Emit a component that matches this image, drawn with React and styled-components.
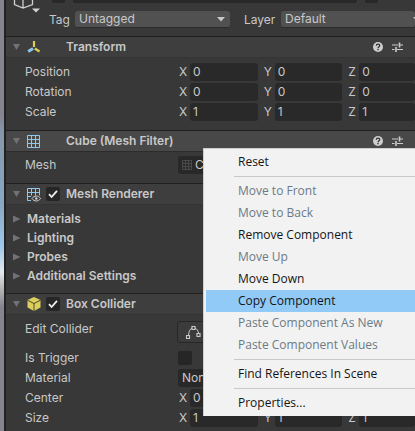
import React from "react";
import styled, { createGlobalStyle } from "styled-components";

const GlobalStyle = createGlobalStyle`
  * { box-sizing: border-box; }
  body {
    margin: 0;
    background: #383838;
    color: #c8c8c8;
    font: 12px/18px Inter, "Liberation Sans", sans-serif;
    overflow: hidden;
  }
  button, input, select { font: inherit; color: inherit; margin: 0; }
`;

const Page = styled.div`
  position: relative;
  display: flex;
  min-height: 100vh;
  overflow: hidden;
`;

const SceneEdge = styled.div`
  flex: 0 0 6px;
  border-right: 2px solid #222222;
  background: linear-gradient(#85858f 27%, #8595a8 30%, #8aa9c6 48%, #9fc8ea 57%, #e3e9ed 63%, #c0c0c0 66%, #85858f 71%);
`;

const Inspector = styled.main`
  flex: 1;
  min-width: 0;
`;

const ObjectHeader = styled.header`
  display: flex;
  height: 36px;
  overflow: hidden;
`;

const ObjectIcon = styled.div`
  flex: 0 0 42px;
  padding-left: 7px;
  svg { display: block; }
`;

const ObjectFields = styled.div`
  flex: 1;
  min-width: 0;
  padding-left: 1px;
`;

const NameRow = styled.div`
  display: flex;
  height: 3px;
  margin-bottom: 8px;
  padding: 0 37px 0 3px;
  gap: 8px;
`;

const NameSlot = styled.div`
  flex: ${(p) => (p.$grow ? "1" : "0 0 13px")};
  background: #282828;
  border-radius: 0 0 2px 2px;
`;

const TagRow = styled.div`
  display: grid;
  grid-template-columns: 26px 155fr 51px 134fr;
  align-items: center;
`;

const TagLabel = styled.label`
  padding-left: ${(p) => (p.$inset ? "14px" : "0")};
  line-height: 16px;
`;

const SelectBox = styled.div`
  display: grid;
  align-items: center;
  background: #515151;
  border-bottom: 1px solid #2c2c2c;
  border-radius: 3px;
  overflow: hidden;
  > * { grid-area: 1 / 1; }
  svg { justify-self: end; margin-right: ${(p) => (p.$edge ? "-6px" : "5px")}; pointer-events: none; }
`;

const Select = styled.select`
  appearance: none;
  width: 100%;
  height: 16px;
  padding: 0 4px;
  border: 0;
  background: transparent;
  line-height: 16px;
`;

const ComponentHeader = styled.header`
  display: flex;
  align-items: center;
  height: 22px;
  padding: 0 12px 0 7px;
  border-top: 1px solid #202020;
  background: ${(p) => (p.$active ? "#484848" : "#3e3e3e")};
  border-bottom: 1px solid ${(p) => (p.$active ? "#2c2c2c" : "#343434")};
  svg { display: block; }
`;

const Foldout = styled.button`
  display: flex;
  align-items: center;
  flex: 0 0 14px;
  height: 18px;
  padding: 0;
  border: 0;
  background: transparent;
`;

const HeaderIcon = styled.span`
  flex: 0 0 19px;
`;

const ToggleSlot = styled.span`
  flex: 0 0 20px;
  display: flex;
`;

const Title = styled.h2`
  flex: 1;
  margin: 0;
  font-size: 12px;
  font-weight: 600;
  line-height: 18px;
`;

const IconButton = styled.button`
  padding: 0;
  border: 0;
  margin-left: 9px;
  background: transparent;
`;

const Check = styled.span`
  display: grid;
  place-items: center;
  width: 14px;
  height: 14px;
  > * { grid-area: 1 / 1; }
  svg { pointer-events: none; }
`;

const CheckInput = styled.input`
  appearance: none;
  width: 14px;
  height: 14px;
  background: #262626;
  border-radius: 2px;
`;

const Body = styled.div`
  display: flex;
  flex-direction: column;
  gap: ${(p) => (p.$tight ? "1px" : "2px")};
  padding: ${(p) => p.$pad};
`;

const Row = styled.div`
  display: grid;
  grid-template-columns: 153px 1fr;
  align-items: center;
  min-height: 18px;
  padding-left: 19px;
`;

const Axes = styled.div`
  display: grid;
  grid-template-columns: 20fr 20fr 17fr;
  gap: 5px;
`;

const Axis = styled.label`
  display: flex;
  span { flex: 0 0 12px; padding-left: 1px; }
`;

const NumberInput = styled.input`
  flex: 1;
  min-width: 0;
  width: 0;
  height: 18px;
  padding: 0 3px;
  border: 0;
  border-radius: 3px;
  background: #292929;
`;

const ObjectField = styled.button`
  display: flex;
  align-items: center;
  gap: 3px;
  height: 18px;
  padding: 0 4px;
  border: 0;
  border-radius: 3px;
  background: #282828;
  text-align: left;
`;

const EditRow = styled(Row)`
  margin-bottom: 4px;
  > span { align-self: start; line-height: 16px; }
`;

const EditButton = styled.button`
  width: 34px;
  height: 22px;
  margin-left: -1px;
  padding: 0 0 0 8px;
  border: 1px solid #272727;
  border-radius: 3px;
  background: #3b3b3b;
  svg { display: block; }
`;

const FoldRow = styled.div`
  display: flex;
  align-items: center;
  height: 18px;
  padding-left: 7px;
  font-weight: 600;
`;

const Menu = styled.div`
  position: absolute;
  top: 148px;
  left: 203px;
  right: 0;
  padding: 2px 0 2px 2px;
  border-top: 1px solid #cfcfcf;
  border-left: 1px solid #cfcfcf;
  background: #f2f2f2;
  font-family: "Open Sans", "Noto Sans", sans-serif;
`;

const MenuItem = styled.button`
  display: block;
  width: 100%;
  height: 22px;
  padding: 0 0 0 32px;
  border: 0;
  background: ${(p) => (p.$selected ? "#91c9f7" : "transparent")};
  color: #151515;
  text-align: left;
  white-space: nowrap;
  &:disabled { color: #6c7a86; }
`;

const MenuRule = styled.hr`
  height: 1px;
  margin: 3px 0 3px 28px;
  border: 0;
  background: #c9c9c9;
`;

const DownArrow = () => (
  <svg width="8" height="5" viewBox="0 0 8 5"><path d="M0 0h8L4 4.5z" fill="#c8c8c8" /></svg>
);

const FoldArrow = ({ open }) => (
  <svg width="8" height="8" viewBox="0 0 8 8">
    <path d={open ? "M0 1h7L3.5 7z" : "M0 .5v7L7.5 4z"} fill="#727276" />
  </svg>
);

const CheckMark = () => (
  <svg width="12" height="12" viewBox="0 0 12 12"><path d="M2 6.2 4.6 9 10 2.8" fill="none" stroke="#f0f0f0" strokeWidth="1.8" /></svg>
);

const GridIcon = ({ eye }) => (
  <svg width="14" height="15" viewBox="0 0 14 15">
    <path d="M.5 1.500h12v12H.5zM4.500 1v13M8.500 1v13M0 5.500h13M0 9.500h13" fill="none" stroke="#8fc8ed" />
    {eye && (
      <g>
        <path d="M4 8.500h10V15H4z" fill="#3e3e3e" />
        <path d="M5 11.500c2-3.300 6.500-3.300 8.500 0-2 3.300-6.500 3.300-8.500 0z" fill="none" stroke="#d0d0d0" />
        <circle cx="9.300" cy="11.500" r="1.200" fill="#d0d0d0" />
      </g>
    )}
  </svg>
);

const TransformIcon = () => (
  <svg width="14" height="14" viewBox="0 0 14 14" fill="none" strokeWidth="2.2">
    <path d="M7 1v6" stroke="#d9cf55" />
    <path d="M7.8 8.5 12.5 11.5" stroke="#d9cf55" />
    <path d="M6 8.5 1.2 11.5" stroke="#8fc8ed" strokeWidth="2.8" />
  </svg>
);

const BoxIcon = () => (
  <svg width="14" height="14" viewBox="0 0 14 14">
    <path d="M7 0 13.5 3v7.5L7 14 .5 10.5V3z" fill="#dccf5d" />
    <path d="M.5 3.2 7 6.5l6.5-3.3M7 6.500V14" fill="none" stroke="#4c4828" />
  </svg>
);

const HelpIcon = () => (
  <svg width="10" height="10" viewBox="0 0 10 10">
    <circle cx="5" cy="5" r="5" fill="#cdcdcd" />
    <path d="M3.3 3.7C3.4 1.6 6.8 1.7 6.7 3.7 6.6 4.8 5 4.7 5 6.2M5 7v1.3" fill="none" stroke="#333" strokeWidth="1.3" />
  </svg>
);

const PresetIcon = () => (
  <svg width="11" height="10" viewBox="0 0 11 10" stroke="#cdcdcd" fill="none">
    <path d="M0 3h6M8 3h3M0 7.5h2.500M5 7.500h6" strokeWidth="1.2" />
    <path d="M7.5.5v5M4 5v5" strokeWidth="1.6" />
  </svg>
);

const NodesIcon = () => (
  <svg width="15" height="14" viewBox="0 0 15 14" fill="none" stroke="#c8c8c8">
    <path d="M2.5 10C3 6 4 4 6 3M9 3c2 1 3 2.500 3.500 5" />
    <path d="M.5 10.500h3v3h-3zM6 1.500h3v3H6zM11 8.500h3v3h-3z" strokeWidth="1.2" />
  </svg>
);

const CubeIcon = () => (
  <svg width="28" height="14" viewBox="0 0 28 14">
    <path d="M1.500-4v8.500L10 8l9.500-3.500V-4M10-4V8" fill="none" stroke="#d2d2d2" strokeWidth="1.3" />
    <path d="M19 8.500h8l-4 4z" fill="#d2d2d2" />
  </svg>
);

const Checkbox = ({ label, checked }) => (
  <Check>
    <CheckInput type="checkbox" aria-label={label} defaultChecked={checked} />
    {checked && <CheckMark />}
  </Check>
);

const ComponentBar = ({ title, icon, toggle, active }) => (
  <ComponentHeader $active={active}>
    <Foldout aria-label={`Collapse ${title}`}><FoldArrow open /></Foldout>
    <HeaderIcon>{icon}</HeaderIcon>
    <ToggleSlot>{toggle && <Checkbox label={title} checked />}</ToggleSlot>
    <Title>{title}</Title>
    <IconButton aria-label={`${title} help`}><HelpIcon /></IconButton>
    <IconButton aria-label={`${title} presets`}><PresetIcon /></IconButton>
  </ComponentHeader>
);

const VectorRow = ({ label, value }) => (
  <Row>
    <span>{label}</span>
    <Axes>
      {["X", "Y", "Z"].map((axis) => (
        <Axis key={axis}>
          <span>{axis}</span>
          <NumberInput aria-label={`${label} ${axis}`} defaultValue={value} />
        </Axis>
      ))}
    </Axes>
  </Row>
);

const MENU = [
  { text: "Reset" },
  null,
  { text: "Move to Front", disabled: true },
  { text: "Move to Back", disabled: true },
  { text: "Remove Component" },
  { text: "Move Up", disabled: true },
  { text: "Move Down" },
  { text: "Copy Component", selected: true },
  { text: "Paste Component As New", disabled: true },
  { text: "Paste Component Values", disabled: true },
  null,
  { text: "Find References In Scene" },
  null,
  { text: "Properties..." },
];

export default function App() {
  return (
    <>
      <GlobalStyle />
      <Page>
        <SceneEdge />
        <Inspector>
          <ObjectHeader>
            <ObjectIcon><CubeIcon /></ObjectIcon>
            <ObjectFields>
              <NameRow><NameSlot /><NameSlot $grow /><NameSlot /></NameRow>
              <TagRow>
                <TagLabel htmlFor="tag">Tag</TagLabel>
                <SelectBox>
                  <Select id="tag"><option>Untagged</option></Select>
                  <DownArrow />
                </SelectBox>
                <TagLabel htmlFor="layer" $inset>Layer</TagLabel>
                <SelectBox $edge>
                  <Select id="layer"><option>Default</option></Select>
                  <DownArrow />
                </SelectBox>
              </TagRow>
            </ObjectFields>
          </ObjectHeader>

          <ComponentBar title="Transform" icon={<TransformIcon />} />
          <Body $pad="5px 0 9px">
            <VectorRow label="Position" value="0" />
            <VectorRow label="Rotation" value="0" />
            <VectorRow label="Scale" value="1" />
          </Body>

          <ComponentBar title="Cube (Mesh Filter)" icon={<GridIcon />} active />
          <Body $pad="4px 0 9px">
            <Row>
              <span>Mesh</span>
              <ObjectField aria-label="Mesh">
                <svg width="10" height="10" viewBox="0 0 10 10">
                  <path d="M.5.5h9v9h-9zM3.500 0v10M6.500 0v10M0 3.500h10M0 6.500h10" fill="none" stroke="#4a4a4a" />
                </svg>
                Cube
              </ObjectField>
            </Row>
          </Body>

          <ComponentBar title="Mesh Renderer" icon={<GridIcon eye />} toggle />
          <Body $tight $pad="5px 0 8px">
            {["Materials", "Lighting", "Probes", "Additional Settings"].map((name) => (
              <FoldRow key={name}>
                <Foldout aria-label={`Expand ${name}`}><FoldArrow /></Foldout>
                {name}
              </FoldRow>
            ))}
          </Body>

          <ComponentBar title="Box Collider" icon={<BoxIcon />} toggle />
          <Body $pad="6px 0 5px">
            <EditRow>
              <span>Edit Collider</span>
              <EditButton aria-label="Edit Collider"><NodesIcon /></EditButton>
            </EditRow>
            <Row><span>Is Trigger</span><Checkbox label="Is Trigger" /></Row>
            <Row>
              <span>Material</span>
              <ObjectField aria-label="Material">None</ObjectField>
            </Row>
            <VectorRow label="Center" value="0" />
            <VectorRow label="Size" value="1" />
          </Body>
        </Inspector>

        <Menu role="menu">
          {MENU.map((item, i) =>
            item ? (
              <MenuItem key={item.text} role="menuitem" disabled={item.disabled} $selected={item.selected}>
                {item.text}
              </MenuItem>
            ) : (
              <MenuRule key={i} />
            )
          )}
        </Menu>
      </Page>
    </>
  );
}
